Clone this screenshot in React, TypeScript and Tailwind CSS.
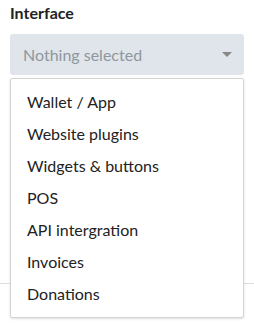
import React from 'react';

const options = [
  'Wallet / App',
  'Website plugins',
  'Widgets & buttons',
  'POS',
  'API intergration',
  'Invoices',
  'Donations',
];

const App: React.FC = () => {
  return (
    <div className="relative w-[254px] h-[330px] bg-white font-['Lato','Noto_Sans',sans-serif] overflow-hidden">
      <div className="px-[10px] pt-[3px]">
        <label className="block text-[16px] font-bold leading-[20px] text-[#222]">Interface</label>
        <div className="mt-[11px] h-[41px] rounded-[3px] bg-[#dfe5ea] flex items-center justify-between pl-[13px] pr-[12px]">
          <span className="text-[16px] text-[#8f979d]">Nothing selected</span>
          <span className="w-0 h-0 border-l-[5px] border-r-[5px] border-t-[5px] border-l-transparent border-r-transparent border-t-[#888]" />
        </div>
      </div>

      {/* background content peeking behind the menu */}
      <div className="mt-[208px] border-b border-[#ddd]" />

      <ul className="absolute left-[10px] top-[78px] w-[234px] bg-white border border-[#d4d4d4] rounded-[2px] pt-[7px] pb-[7px] shadow-sm">
        {options.map((o) => (
          <li key={o} className="h-[32px] flex items-center pl-[16px] text-[16px] text-[#222]">
            {o}
          </li>
        ))}
      </ul>
    </div>
  );
};

export default App;
